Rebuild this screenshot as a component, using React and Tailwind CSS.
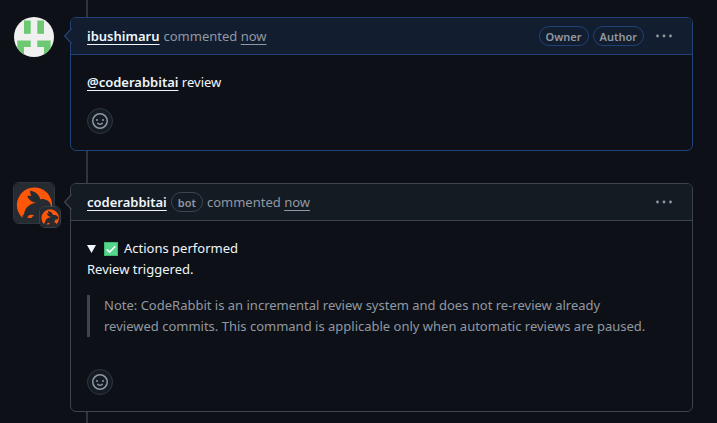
const fontStack = "font-['Noto_Sans','Open_Sans',sans-serif]";

function Caret({ fill, stroke }) {
  return (
    <svg className="absolute -left-[7px] top-[10px]" width="8" height="16" viewBox="0 0 8 16" aria-hidden="true">
      <path d="M8 0 0.7 8 8 16Z" fill={fill} />
      <path d="M7.500 0.500 0.700 8 7.500 15.500" fill="none" stroke={stroke} strokeWidth="1.400" />
    </svg>
  );
}

function Badge({ children, tone }) {
  return (
    <span className={`flex h-5 items-center rounded-full border px-1.5 text-[11px] font-semibold text-[#9198a1] ${tone}`}>
      {children}
    </span>
  );
}

function MenuButton() {
  return (
    <button type="button" aria-label="Show options" className="flex h-6 w-8 items-center justify-center text-[#9198a1]">
      <svg width="16" height="16" viewBox="0 0 16 16" fill="currentColor" aria-hidden="true">
        <circle cx="1.5" cy="8" r="1.4" />
        <circle cx="8" cy="8" r="1.4" />
        <circle cx="14.5" cy="8" r="1.4" />
      </svg>
    </button>
  );
}

function ReactionButton() {
  return (
    <button type="button" aria-label="Add reaction" className="flex size-[26px] items-center justify-center rounded-full border border-[#30373f] bg-[#151b23] text-[#9198a1]">
      <svg width="16" height="16" viewBox="0 0 16 16" fill="currentColor" aria-hidden="true">
        <path d="M8 0a8 8 0 1 1 0 16A8 8 0 0 1 8 0ZM1.5 8a6.5 6.5 0 1 0 13 0 6.5 6.5 0 0 0-13 0Zm3.82 1.636a.75.75 0 0 1 1.038.175l.007.009c.103.118.22.222.35.31.264.178.683.37 1.285.37.602 0 1.02-.192 1.285-.371.13-.088.247-.192.35-.31l.007-.008a.75.75 0 0 1 1.222.87l-.022-.015.021.016v.001l-.002.002-.005.006-.014.019a2.066 2.066 0 0 1-.184.213c-.16.166-.338.316-.53.445-.63.418-1.37.638-2.127.629-.946 0-1.652-.308-2.126-.63a3.331 3.331 0 0 1-.715-.657l-.014-.02-.005-.006-.002-.002v-.002h-.001l.613-.432-.614.43a.75.75 0 0 1 .183-1.044ZM12 7a1 1 0 1 1-2 0 1 1 0 0 1 2 0ZM5 8a1 1 0 1 1 0-2 1 1 0 0 1 0 2Z" />
      </svg>
    </button>
  );
}

function IdenticonAvatar() {
  return (
    <svg className="block size-10 rounded-full" viewBox="0 0 40 40" role="img" aria-label="ibushimaru">
      <rect width="40" height="40" fill="#f0f0f0" />
      <g fill="#6cc972">
        <rect x="10" y="3.5" width="6.7" height="13.3" />
        <rect x="23.3" y="3.5" width="6.7" height="13.3" />
        <path d="M3.3 23.4h13.4v6.6H10v10H3.3Z" />
        <path d="M36.7 23.4H23.3v6.6H30v10h6.7Z" />
      </g>
    </svg>
  );
}

function RabbitLogo({ className }) {
  return (
    <svg className={className} viewBox="0 0 40 40" aria-hidden="true">
      <rect width="40" height="40" fill="#262a31" />
      <path fill="#ff570a" d="M8.500 35A17.600 17.600 0 1 1 32.400 35Z" />
      <g fill="#262a31">
        <path d="M16 7.800c5.400.4 9.600 4.200 10.600 9.800l-3.400 1c-4-2-7-5.600-7.200-10.800Z" />
        <path d="M13.200 13c4.400-.8 8.600.8 11 4.300l-1 2.500c-4.800-.2-8.200-2.200-10-6.800Z" />
        <path d="M8.600 36C8 33.500 8.600 31.800 10 31.200c.8-6 5.200-10.600 12.200-11.400 1.600-3 4.800-4.300 8-3.600 4 .8 6.400 3.600 6.600 6 .1 2-3 3-6.600 3.200.2 2.200-.6 3.700-2.200 4.900 2.800.2 4.800 1.800 5.300 5.700Z" />
      </g>
      <path d="M13.500 35c.4-2.200 1.800-3.300 3.900-3.300 1.300 0 2.200.5 2.800 1.300-1.600.2-2.400.8-2.700 2Z" fill="#ff570a" />
    </svg>
  );
}

function BotAvatar() {
  return (
    <div className="relative">
      <div className="-m-px size-[42px] overflow-hidden rounded-md border border-[#30353c]">
        <RabbitLogo className="block size-10" />
      </div>
      <div className="absolute -bottom-1 -right-[7px] size-[22px] overflow-hidden rounded-md border border-[#3a3e45]">
        <RabbitLogo className="block size-5" />
      </div>
    </div>
  );
}

const tones = {
  own: { frame: "border-[#1f4277]", header: "border-[#1f4277] bg-[#121d2f]", fill: "#121d2f", stroke: "#1f4277" },
  other: { frame: "border-[#3d444d]", header: "border-[#3d444d] bg-[#151b23]", fill: "#151b23", stroke: "#3d444d" },
};

function Comment({ avatar, author, bot, badges, tone, children }) {
  const t = tones[tone];
  return (
    <article className="flex items-start gap-4">
      <a href="#profile" className="w-10 shrink-0">{avatar}</a>
      <div className={`relative min-w-0 flex-1 rounded-md border bg-[#0d1117] ${t.frame}`}>
        <header className={`relative flex h-[37px] items-center rounded-t-[5px] border-b pl-4 pr-3 text-[#9198a1] ${t.header}`}>
          <Caret fill={t.fill} stroke={t.stroke} />
          <div className="flex flex-1 items-center gap-1">
            <a href="#profile" className="font-semibold text-[#f0f6fc] underline underline-offset-3">{author}</a>
            {bot && <Badge tone="border-[#3d444d]">bot</Badge>}
            <span>
              commented <a href="#comment" className="underline underline-offset-3">now</a>
            </span>
          </div>
          <div className="flex items-center gap-1">
            {badges.map((badge) => (
              <Badge key={badge} tone="border-[#1f4277]">{badge}</Badge>
            ))}
            <MenuButton />
          </div>
        </header>
        <div className="px-4 pb-4 pt-[17px] text-[#f0f6fc]">{children}</div>
      </div>
    </article>
  );
}

function CheckEmoji() {
  return (
    <svg width="14" height="14" viewBox="0 0 14 14" role="img" aria-label="Done">
      <rect width="14" height="14" fill="#3fb871" />
      <rect x="1" y="1" width="12" height="12" fill="#55d68c" />
      <path d="M2.8 7.3 5.6 10 11.3 4.200" fill="none" stroke="#fff" strokeWidth="1.600" />
    </svg>
  );
}

export default function App() {
  return (
    <main className={`min-h-screen bg-[#0d1117] pl-3.5 pr-6 text-[13px] leading-[21px] ${fontStack}`}>
      <div className="ml-[72px] h-[17px] w-0.5 bg-[#2f353d]" />
      <Comment avatar={<IdenticonAvatar />} author="ibushimaru" badges={["Owner", "Author"]} tone="own">
        <p>
          <a href="#mention" className="font-semibold underline underline-offset-3">@coderabbitai</a> review
        </p>
        <div className="mt-[15px]"><ReactionButton /></div>
      </Comment>
      <div className="ml-[72px] h-8 w-0.5 bg-[#2f353d]" />
      <Comment avatar={<BotAvatar />} author="coderabbitai" bot badges={[]} tone="other">
        <details open>
          <summary className="flex list-none items-center">
            <svg className="mr-2" width="9" height="8" viewBox="0 0 9 8" fill="currentColor" aria-hidden="true">
              <path d="M0 0h9L4.500 8Z" />
            </svg>
            <CheckEmoji />
            <span className="ml-1.5">Actions performed</span>
          </summary>
          <p>Review triggered.</p>
          <blockquote className="mt-[15px] border-l-3 border-[#3d444d] pl-3.5 pr-6 text-[#9198a1]">
            Note: CodeRabbit is an incremental review system and does not re-review already reviewed commits. This command is applicable only when automatic reviews are paused.
          </blockquote>
        </details>
        <div className="mt-8"><ReactionButton /></div>
      </Comment>
      <div className="ml-[72px] h-[11px] w-0.5 bg-[#2f353d]" />
    </main>
  );
}
